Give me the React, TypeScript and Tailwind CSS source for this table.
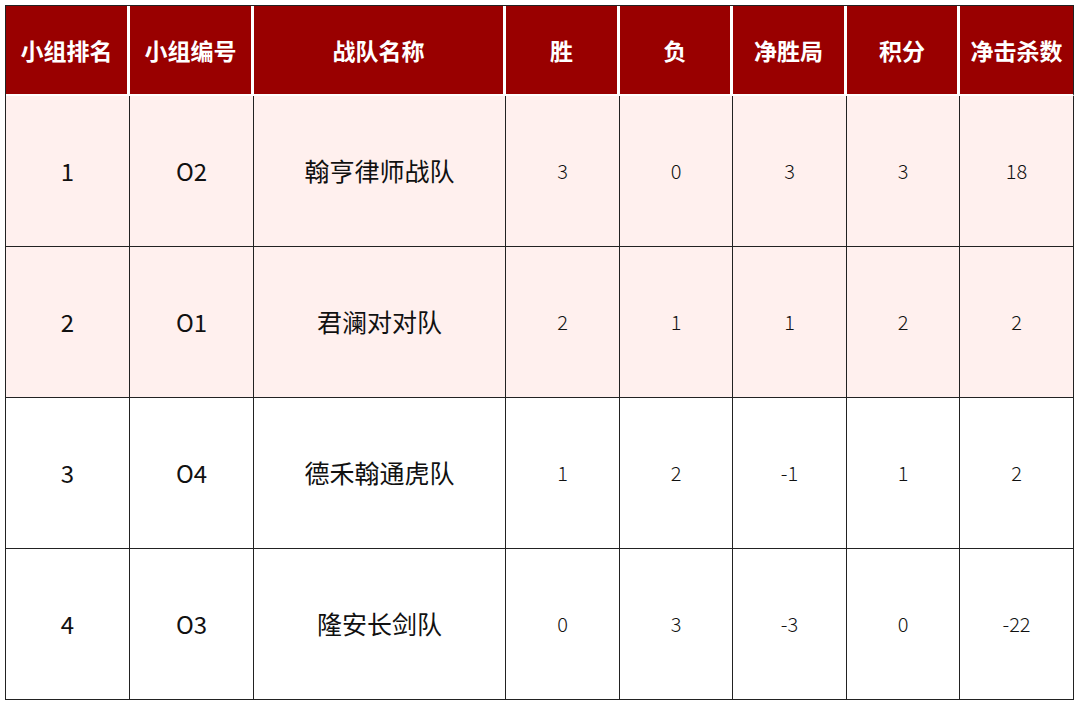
const cols = "grid grid-cols-[124px_124px_252px_114px_113px_114px_113px_114px]";

const headers = ["小组排名", "小组编号", "战队名称", "胜", "负", "净胜局", "积分", "净击杀数"];

const rows = [
  { rank: "1", code: "O2", team: "翰亨律师战队", win: "3", lose: "0", net: "3", pts: "3", kills: "18", hl: true },
  { rank: "2", code: "O1", team: "君澜对对队", win: "2", lose: "1", net: "1", pts: "2", kills: "2", hl: true },
  { rank: "3", code: "O4", team: "德禾翰通虎队", win: "1", lose: "2", net: "-1", pts: "1", kills: "2", hl: false },
  { rank: "4", code: "O3", team: "隆安长剑队", win: "0", lose: "3", net: "-3", pts: "0", kills: "-22", hl: false },
];

export default function App() {
  return (
    <div
      className="h-[708px] w-[1080px] bg-white pl-[5px] pt-[5px]"
      style={{ fontFamily: '"Noto Sans CJK SC", "Noto Sans", sans-serif' }}
    >
      <div className="w-[1069px] border-l border-t border-[#222]">
        <div className={cols}>
          {headers.map((h, i) => (
            <div
              key={h}
              className={
                "flex h-[90px] items-center justify-center border-b-[2px] border-white bg-[#990000] text-[23px] font-bold text-white " +
                (i < headers.length - 1 ? "border-r-[3px]" : "border-r border-r-[#222]")
              }
            >
              {h}
            </div>
          ))}
        </div>
        {rows.map((r) => {
          const bg = r.hl ? "bg-[#fff0ee]" : "bg-white";
          const cell = `flex h-[151px] items-center justify-center border-b border-r border-[#222] text-[#111] ${bg}`;
          return (
            <div key={r.rank} className={cols}>
              <div className={cell + " text-[24px]"}>{r.rank}</div>
              <div className={cell + " text-[24px]"}>{r.code}</div>
              <div className={cell + " text-[25px]"}>{r.team}</div>
              <div className={cell + " text-[20px] font-light"}>{r.win}</div>
              <div className={cell + " text-[20px] font-light"}>{r.lose}</div>
              <div className={cell + " text-[20px] font-light"}>{r.net}</div>
              <div className={cell + " text-[20px] font-light"}>{r.pts}</div>
              <div className={cell + " text-[20px] font-light"}>{r.kills}</div>
            </div>
          );
        })}
      </div>
    </div>
  );
}
